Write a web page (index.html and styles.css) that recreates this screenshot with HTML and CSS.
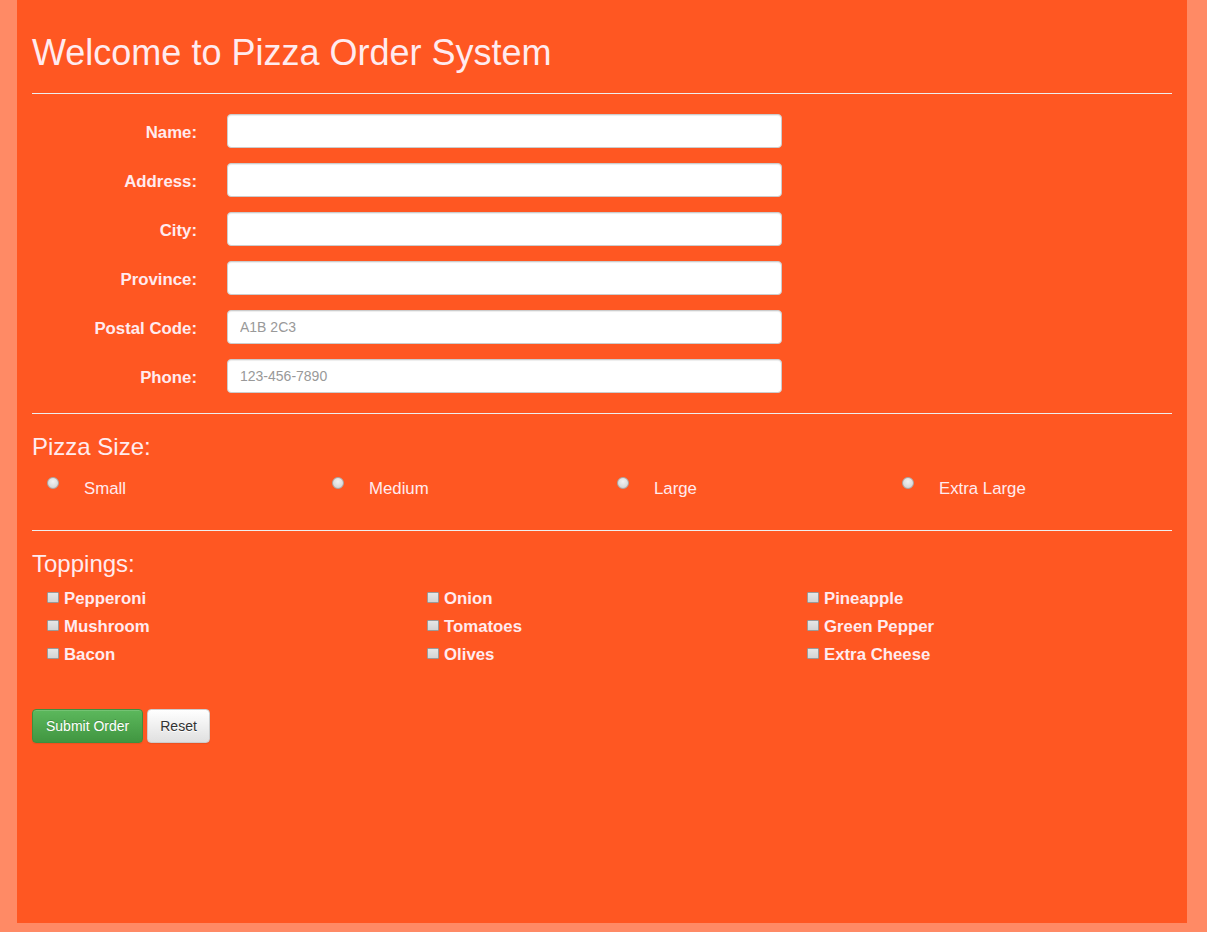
FILE: index.html
```html
<!DOCTYPE html>
<html lang="en">
<head>
<meta charset="utf-8">
<title>Pizza Order System</title>
<link rel="stylesheet" href="styles.css">
</head>
<body>
<div class="container">
  <h1 class="title">Welcome to Pizza Order System</h1>
  <hr class="rule rule-top">
  <form class="order-form">
    <div class="form-group">
      <label class="form-label" for="name">Name:</label>
      <input class="form-input" id="name" type="text">
    </div>
    <div class="form-group">
      <label class="form-label" for="address">Address:</label>
      <input class="form-input" id="address" type="text">
    </div>
    <div class="form-group">
      <label class="form-label" for="city">City:</label>
      <input class="form-input" id="city" type="text">
    </div>
    <div class="form-group">
      <label class="form-label" for="province">Province:</label>
      <input class="form-input" id="province" type="text">
    </div>
    <div class="form-group">
      <label class="form-label" for="postal">Postal Code:</label>
      <input class="form-input" id="postal" type="text" placeholder="A1B 2C3">
    </div>
    <div class="form-group">
      <label class="form-label" for="phone">Phone:</label>
      <input class="form-input" id="phone" type="text" placeholder="123-456-7890">
    </div>
  </form>
  <hr class="rule rule-mid">
  <h3 class="section-title">Pizza Size:</h3>
  <div class="size-row">
    <label class="size-option"><input class="radio" type="radio" name="size"><span class="size-text">Small</span></label>
    <label class="size-option"><input class="radio" type="radio" name="size"><span class="size-text">Medium</span></label>
    <label class="size-option"><input class="radio" type="radio" name="size"><span class="size-text">Large</span></label>
    <label class="size-option"><input class="radio" type="radio" name="size"><span class="size-text">Extra Large</span></label>
  </div>
  <hr class="rule rule-size">
  <h3 class="section-title">Toppings:</h3>
  <div class="toppings">
    <label class="topping"><input class="check" type="checkbox"><span>Pepperoni</span></label>
    <label class="topping"><input class="check" type="checkbox"><span>Onion</span></label>
    <label class="topping"><input class="check" type="checkbox"><span>Pineapple</span></label>
    <label class="topping"><input class="check" type="checkbox"><span>Mushroom</span></label>
    <label class="topping"><input class="check" type="checkbox"><span>Tomatoes</span></label>
    <label class="topping"><input class="check" type="checkbox"><span>Green Pepper</span></label>
    <label class="topping"><input class="check" type="checkbox"><span>Bacon</span></label>
    <label class="topping"><input class="check" type="checkbox"><span>Olives</span></label>
    <label class="topping"><input class="check" type="checkbox"><span>Extra Cheese</span></label>
  </div>
  <div class="actions">
    <button class="btn btn-success" type="button">Submit Order</button>
    <button class="btn btn-default" type="button">Reset</button>
  </div>
</div>
</body>
</html>
```

FILE: styles.css
```css
html, body {
  margin: 0;
  padding: 0;
}
body {
  background: #ff8a65;
  font-family: "Liberation Sans", Arial, sans-serif;
  font-size: 16.8px;
  color: #ffebef;
  width: 1207px;
  height: 932px;
  overflow: hidden;
}
.container {
  box-sizing: border-box;
  width: 1170px;
  height: 923px;
  margin-left: 17px;
  padding: 0 15px;
  background: #ff5722;
  display: flex;
  flex-direction: column;
}
.title {
  margin: 33px 0 20px;
  font-size: 36px;
  font-weight: 400;
  line-height: 40px;
}
.rule {
  margin: 0;
  height: 0;
  border: 0;
  border-top: 1px solid #eeeeee;
}
.rule-top { margin-bottom: 20px; }
.rule-mid { margin-top: 20px; }
.rule-size { margin-top: 29px; }
.order-form {
  display: flex;
  flex-direction: column;
  gap: 15px;
}
.form-group {
  display: grid;
  grid-template-columns: 165px 555px;
  column-gap: 30px;
}
.form-label {
  text-align: right;
  font-weight: 700;
  padding-top: 7px;
  line-height: 24px;
}
.form-input {
  box-sizing: border-box;
  height: 34px;
  padding: 6px 12px;
  font-family: "Liberation Sans", Arial, sans-serif;
  font-size: 14px;
  color: #555;
  background: #fff;
  border: 1px solid #ccc;
  border-radius: 4px;
  box-shadow: inset 0 1px 1px rgba(0,0,0,.075);
  outline: none;
}
.form-input::placeholder { color: #999; }
.section-title {
  margin: 20px 0 0;
  font-size: 24px;
  font-weight: 400;
  line-height: 26.4px;
}
.size-row {
  margin-top: 17px;
  display: grid;
  grid-template-columns: repeat(4, 1fr);
}
.size-option {
  display: flex;
  align-items: flex-start;
  line-height: 24px;
  padding-left: 15px;
}
.radio {
  appearance: none;
  -webkit-appearance: none;
  box-sizing: border-box;
  width: 12px;
  height: 12px;
  margin: 0 25px 0 0;
  border-radius: 50%;
  border: 1px solid #a8a8a8;
  background: radial-gradient(circle at 50% 35%, #f2f2f2 0%, #dcdcdc 60%, #c8c8c8 100%);
}
.toppings {
  margin-top: 7px;
  display: grid;
  grid-template-columns: repeat(3, 1fr);
}
.topping {
  display: flex;
  align-items: flex-start;
  line-height: 28px;
  font-weight: 700;
  padding-left: 15px;
}
.check {
  appearance: none;
  -webkit-appearance: none;
  box-sizing: border-box;
  width: 12px;
  height: 11px;
  margin: 7px 5px 0 0;
  border: 1px solid #9a9a9a;
  border-radius: 1px;
  background: linear-gradient(#e6e6e6, #d4d4d4);
}
.actions {
  margin-top: 40px;
  display: flex;
  gap: 4px;
}
.btn {
  box-sizing: border-box;
  height: 34px;
  padding: 6px 12px;
  font-family: "Liberation Sans", Arial, sans-serif;
  font-size: 14px;
  line-height: 20px;
  border-radius: 4px;
  cursor: pointer;
}
.btn-success {
  padding: 6px 13px;
  color: #fff;
  background: linear-gradient(#5cb85c, #419641);
  border: 1px solid #3e8f3e;
  box-shadow: inset 0 1px 0 rgba(255,255,255,.15), 0 1px 1px rgba(0,0,0,.075);
  text-shadow: 0 -1px 0 rgba(0,0,0,.2);
}
.btn-default {
  color: #333;
  background: linear-gradient(#ffffff, #e0e0e0);
  border: 1px solid #ccc;
  box-shadow: inset 0 1px 0 rgba(255,255,255,.15), 0 1px 1px rgba(0,0,0,.075);
  text-shadow: 0 1px 0 #fff;
}
```
